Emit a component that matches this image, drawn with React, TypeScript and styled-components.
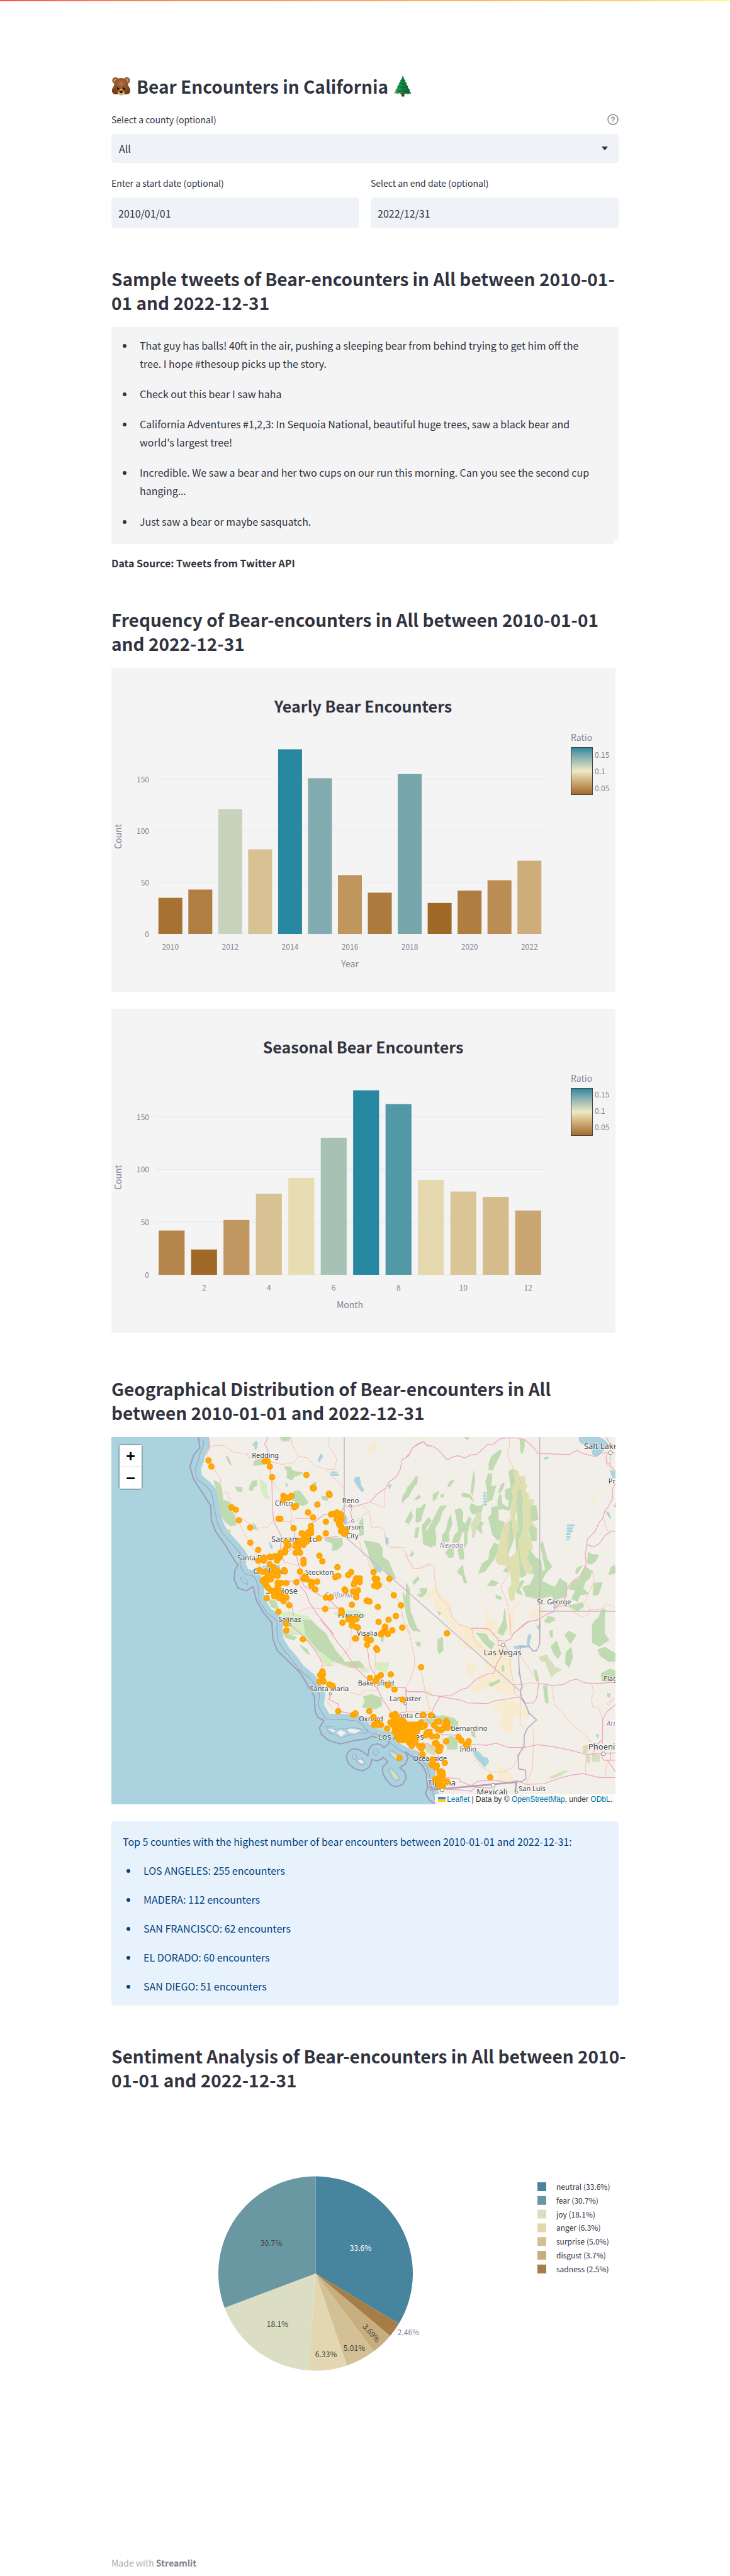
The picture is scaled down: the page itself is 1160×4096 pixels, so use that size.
import React from "react";
import styled, { createGlobalStyle } from "styled-components";

const sans = `"Noto Sans CJK SC", "Noto Sans", sans-serif`;

const GlobalStyle = createGlobalStyle`
  *, *::before, *::after { box-sizing: border-box; }
  body {
    margin: 0;
    background: #ffffff;
    color: #31333f;
    font-family: ${sans};
    font-size: 16px;
    line-height: 29px;
  }
`;

const TopBar = styled.div`
  height: 2px;
  background: linear-gradient(90deg, #ff4b4b, #ff7c58 14%, #ffd173 87%, #fffd80);
`;

const Page = styled.div`
  display: flex;
  flex-direction: column;
  max-width: 846px;
  margin: 0 auto;
  padding: 116px 20px 12px;
`;

const Main = styled.main`
  display: flex;
  flex-direction: column;
  gap: 18px;
`;

const Filters = styled.form`
  display: flex;
  flex-direction: column;
  gap: 22px;
`;

const PageTitle = styled.h1`
  display: flex;
  align-items: center;
  gap: 9px;
  margin: 0 0 2px;
  font-size: 28px;
  font-weight: 600;
  line-height: 38px;
`;

const Field = styled.div`
  display: flex;
  flex-direction: column;
  flex: 1;
  gap: 13px;
`;

const FieldRow = styled.div`
  display: flex;
  gap: 18px;
`;

const LabelRow = styled.div`
  display: flex;
  justify-content: space-between;
  align-items: center;
  height: 20px;
`;

const FieldLabel = styled.label`
  font-size: 14px;
  line-height: 20px;
`;

const HelpButton = styled.button`
  display: flex;
  padding: 0;
  border: 0;
  background: none;
  color: #86878f;
`;

const SelectBox = styled.div`
  display: grid;
  align-items: center;
`;

const Select = styled.select`
  grid-area: 1 / 1;
  width: 100%;
  height: 46px;
  padding: 0 12px;
  border: 0;
  border-radius: 5px;
  appearance: none;
  background: #eff2f7;
  color: #31333f;
  font: 16px/24px ${sans};
`;

const Caret = styled.svg`
  grid-area: 1 / 1;
  justify-self: end;
  margin-right: 17px;
  pointer-events: none;
`;

const DateInput = styled.input`
  width: 100%;
  height: 49px;
  padding: 0 11px;
  border: 0;
  border-radius: 5px;
  background: #eff2f7;
  color: #31333f;
  font: 16px/24px ${sans};
`;

/* The negative right margin lets a long line hang slightly past the column. */
const SectionTitle = styled.h2`
  margin: 0 -14px 2px 0;
  padding-top: 43px;
  font-size: 28px;
  font-weight: 600;
  line-height: 38px;
`;

const TweetFrame = styled.div`
  display: flex;
  flex-direction: column;
  margin-bottom: 9px;
  padding-right: 7px;
  background: #f4f4f4;
`;

const BulletList = styled.ul`
  display: flex;
  flex-direction: column;
  margin: 0;
  padding: 0;
  list-style: none;
`;

const Bullet = styled.li`
  &::before {
    content: "";
    float: left;
    width: 6px;
    height: 6px;
    margin: 12px 0 0 -27px;
    border-radius: 50%;
    background: currentColor;
  }
`;

const TweetList = styled(BulletList)`
  gap: 19px;
  margin-bottom: -7px;
  padding: 15px 32px 21px 45px;
  background: #f4f4f4;
`;

const Ellipsis = styled.span`
  font-family: "Noto Sans", sans-serif;
`;

const Source = styled.p`
  margin: 0;
  font-weight: 600;
  line-height: 20px;
`;

const Figure = styled.figure`
  margin: 0 0 9px;
  padding-right: 5px;
`;

const Drawing = styled.svg`
  display: block;
  width: 100%;
  height: auto;
  font-family: ${sans};
`;

const MapFrame = styled.div`
  position: relative;
  overflow: hidden;
`;

const ZoomControl = styled.div`
  position: absolute;
  top: 11px;
  left: 11px;
  width: 39px;
  border: 2px solid rgba(0, 0, 0, 0.2);
  border-radius: 5px;
  background-clip: padding-box;
`;

const ZoomButton = styled.button`
  display: block;
  width: 100%;
  height: 34px;
  padding: 0;
  border: 0;
  background: #ffffff;
  color: #000000;
  font: bold 25px/34px "Liberation Sans", sans-serif;

  & + & {
    border-top: 1px solid #cccccc;
    height: 35px;
  }
`;

const Attribution = styled.div`
  position: absolute;
  right: 0;
  bottom: 0;
  display: flex;
  align-items: center;
  gap: 2px;
  padding: 0 5px;
  background: rgba(255, 255, 255, 0.8);
  color: #333333;
  font: 12px/16px "Liberation Sans", sans-serif;
`;

const MapLink = styled.a`
  color: #0078a8;
  text-decoration: none;
`;

const InfoBox = styled.section`
  display: flex;
  flex-direction: column;
  gap: 17px;
  padding: 18px 18px 16px;
  border-radius: 5px;
  background: #e8f2fc;
  color: #004280;
`;

const InfoText = styled.p`
  margin: 0;
`;

const InfoList = styled(BulletList)`
  gap: 17px;
  padding-left: 33px;
`;

const Footer = styled.footer`
  margin-top: 195px;
  color: #a9aaaf;
  font-size: 14px;
  line-height: 20px;
`;

const FooterLink = styled.a`
  color: #83848c;
  font-weight: 600;
  text-decoration: none;
`;

/* ---------- Emoji ---------- */

const BearIcon = () => (
  <svg width="31" height="30" viewBox="0 0 31 30" aria-hidden="true">
    <defs>
      <radialGradient id="fur" cx="50%" cy="35%" r="65%">
        <stop offset="0" stopColor="#b9714a" />
        <stop offset="0.45" stopColor="#945527" />
        <stop offset="1" stopColor="#713a10" />
      </radialGradient>
    </defs>
    <circle cx="6.6" cy="6" r="5.2" fill="#8b5128" />
    <circle cx="24.4" cy="6" r="5.2" fill="#8b5128" />
    <circle cx="6.9" cy="6.4" r="3.3" fill="#cf8d72" />
    <circle cx="24.1" cy="6.4" r="3.3" fill="#cf8d72" />
    <path d="M15.5 2C9 2 5 6.5 4.6 12.500C4.300 15.500 1 17.500 1 22C1 26 3.600 28 7.500 28H23.500C27.400 28 30 26 30 22C30 17.500 26.700 15.500 26.400 12.500C26 6.500 22 2 15.500 2Z" fill="url(#fur)" />
    <path d="M15.500 18.500C13.500 21 9.800 23.500 10 26C10.300 28.500 13 29.800 15.500 29.800C18 29.800 20.700 28.500 21 26C21.200 23.500 17.500 21 15.500 18.500Z" fill="#e3b273" />
    <path d="M12.400 23C12.400 21.700 18.600 21.700 18.600 23C18.600 24.800 16.800 26.200 15.500 26.200C14.200 26.200 12.400 24.800 12.400 23Z" fill="#1d1b24" />
    <path d="M15.500 26V28" stroke="#5b3a1c" strokeWidth="0.8" />
    <ellipse cx="10.600" cy="18.200" rx="1.600" ry="2.600" fill="#1b130d" />
    <ellipse cx="20.400" cy="18.200" rx="1.600" ry="2.600" fill="#1b130d" />
    <circle cx="10.900" cy="17.200" r="0.600" fill="#fff" />
    <circle cx="20.700" cy="17.200" r="0.600" fill="#fff" />
  </svg>
);

const TreeIcon = () => (
  <svg width="28" height="34" viewBox="0 0 28 34" aria-hidden="true">
    <defs>
      <linearGradient id="needles" x1="0" x2="1">
        <stop offset="0" stopColor="#2fae58" />
        <stop offset="0.5" stopColor="#14813f" />
        <stop offset="1" stopColor="#0c5c33" />
      </linearGradient>
    </defs>
    <rect x="12" y="26" width="4.400" height="7.500" fill="#5c3317" />
    <path d="M14 0L17 7L18.500 8L17.500 9L20.500 13L19.500 14L23 18L21.500 19L25.500 23L24.500 24L27.500 29L24 28.500L22.500 30.500L19.500 28.500L17.500 30L14 28L10.500 30L8.500 28L5.500 29.500L4 28L0.500 29L3 24L2 23.500L6 19L4.500 18.500L8 14L7 13.500L10.500 9L9.500 8L11.500 6.500Z" fill="url(#needles)" />
    <path d="M10 12L14 14.500L18.500 12M7 17.500L11 19.500L14 18L18 20L21 17.500M4.500 24L9 25.500L13 23.500L18 26L23.500 23M11.500 8L14 9.500L16.500 8" fill="none" stroke="#0a4f2c" strokeWidth="0.9" />
  </svg>
);

const HelpIcon = () => (
  <svg width="18" height="18" viewBox="0 0 18 18" fill="none" stroke="currentColor" strokeWidth="1.500" strokeLinecap="round" aria-hidden="true">
    <circle cx="9" cy="9" r="8" />
    <path d="M6.800 7.200C6.800 4.300 11.200 4.300 11.200 7.200C11.200 8.900 9 9 9 10.600" />
    <path d="M9 13V13.100" />
  </svg>
);

/* ---------- Bar charts ---------- */

const earth: number[][] = [
  [161, 105, 40],
  [189, 146, 90],
  [214, 189, 141],
  [237, 234, 194],
  [181, 200, 184],
  [121, 167, 172],
  [40, 135, 161],
];

const earthColor = (t: number) => {
  const p = Math.min(Math.max(t, 0), 1) * (earth.length - 1);
  const i = Math.min(Math.floor(p), earth.length - 2);
  const c = earth[i].map((v, k) => Math.round(v + (earth[i + 1][k] - v) * (p - i)));
  return `rgb(${c.join(",")})`;
};

type BarChartProps = {
  id: string;
  title: string;
  axis: string;
  first: number;
  values: number[];
  unit: number;
  ratioTicks: [string, number][];
};

const plot = { left: 70, right: 688, base: 423 };

const BarChart = ({ id, title, axis, first, values, unit, ratioTicks }: BarChartProps) => {
  const pitch = (plot.right - plot.left) / values.length;
  const low = Math.min(...values);
  const high = Math.max(...values);
  return (
    <Figure>
      <Drawing viewBox="0 0 801 515" role="img" aria-label={title}>
        <defs>
          <linearGradient id={id} x1="0" y1="1" x2="0" y2="0">
            {earth.map((c, i) => (
              <stop key={i} offset={i / (earth.length - 1)} stopColor={`rgb(${c.join(",")})`} />
            ))}
          </linearGradient>
        </defs>
        <rect width="801" height="515" fill="#f4f4f4" />
        <text x="400" y="71" textAnchor="middle" fontSize="25" fontWeight="700" fill="#31333f">{title}</text>
        {[0, 50, 100, 150].map((v) => (
          <g key={v}>
            <path d={`M${plot.left} ${plot.base - v * unit}H${plot.right}`} stroke="#e6eaf1" strokeWidth="1.200" />
            <text x="60" y={plot.base - v * unit + 5} textAnchor="end" fontSize="12" fill="#808495">{v}</text>
          </g>
        ))}
        {values.map((v, i) => {
          const n = first + i;
          return (
            <g key={n}>
              <rect
                x={plot.left + pitch * (i + 0.1)}
                y={plot.base - v * unit}
                width={pitch * 0.8}
                height={v * unit}
                fill={earthColor((v - low) / (high - low))}
              />
              {n % 2 === 0 && (
                <text x={plot.left + pitch * (i + 0.5)} y="448" textAnchor="middle" fontSize="12" fill="#808495">{n}</text>
              )}
            </g>
          );
        })}
        <text x="379" y="476" textAnchor="middle" fontSize="14" fill="#808495">{axis}</text>
        <text transform="translate(16 268) rotate(-90)" textAnchor="middle" fontSize="14" fill="#808495">Count</text>
        <text x="730" y="116" fontSize="14" fill="#808495">Ratio</text>
        <rect x="730.500" y="126.500" width="34" height="75" fill={`url(#${id})`} stroke="#444444" />
        {ratioTicks.map(([label, y]) => (
          <text key={label} x="768" y={y} fontSize="12" fill="#808495">{label}</text>
        ))}
      </Drawing>
    </Figure>
  );
};

/* ---------- Pie chart ---------- */

const moods = [
  { name: "neutral", legend: "33.6%", label: "33.6%", share: 33.6, color: "#47849d", x: 396, y: 229, ink: "#ffffff" },
  { name: "fear", legend: "30.7%", label: "30.7%", share: 30.7, color: "#6998a2", x: 254, y: 221, ink: "#444444" },
  { name: "joy", legend: "18.1%", label: "18.1%", share: 18.1, color: "#dcdec4", x: 264, y: 350, ink: "#444444" },
  { name: "anger", legend: "6.3%", label: "6.33%", share: 6.33, color: "#e3d7b1", x: 341, y: 398, ink: "#444444" },
  { name: "surprise", legend: "5.0%", label: "5.01%", share: 5.01, color: "#d3c195", x: 386, y: 388, ink: "#444444" },
  { name: "disgust", legend: "3.7%", label: "3.69%", share: 3.69, color: "#c8ad7f", x: 413, y: 364, ink: "#444444", turn: 49 },
  { name: "sadness", legend: "2.5%", label: "2.46%", share: 2.46, color: "#a67c47", x: 472, y: 363, ink: "#808495" },
];

const PieChart = () => {
  const [cx, cy, r] = [324.5, 269, 154.5];
  const total = moods.reduce((sum, m) => sum + m.share, 0);
  const order = [moods[0], ...moods.slice(1).reverse()];
  let from = 0;
  const slices = order.map((m) => {
    const to = from + (m.share / total) * Math.PI * 2;
    const at = (a: number) => `${(cx + r * Math.sin(a)).toFixed(1)} ${(cy - r * Math.cos(a)).toFixed(1)}`;
    const d = `M${cx} ${cy}L${at(from)}A${r} ${r} 0 0 1 ${at(to)}Z`;
    from = to;
    return <path key={m.name} d={d} fill={m.color} />;
  });
  return (
    <Figure>
      <Drawing viewBox="0 0 801 515" role="img" aria-label="Sentiment shares">
        {slices}
        {moods.map((m, i) => (
          <g key={m.name} fontSize="12">
            <text
              transform={`translate(${m.x} ${m.y}) rotate(${m.turn ?? 0})`}
              y="4"
              textAnchor="middle"
              fill={m.ink}
            >
              {m.label}
            </text>
            <rect x="677" y={124 + i * 21.8} width="14" height="14" fill={m.color} />
            <text x="707" y={136 + i * 21.8} fill="#31333f">{`${m.name} (${m.legend})`}</text>
          </g>
        ))}
      </Drawing>
    </Figure>
  );
};

/* ---------- Map ---------- */

type Sheet = { sx: number; sy: number; ox: number; oy: number };

/* Every map sheet has its own scale; these place it on the 801 x 584 canvas. */
const state: Sheet = { sx: 0.5402, sy: 0.4599, ox: -17.8, oy: -121 };
const north: Sheet = { sx: 0.25548, sy: 0.20438, ox: 108.1, oy: -6.5 };
const south: Sheet = { sx: 0.29197, sy: 0.19708, ox: 165.4, oy: 291.1 };
const nevada: Sheet = { sx: 0.21898, sy: 0.20438, ox: 468.7, oy: -6.5 };
const desert: Sheet = { sx: 0.21898, sy: 0.19708, ox: 468.7, oy: 291.1 };

const coast =
  "M318,263L322,293 311,320 304,351 297,373 299,396 323,418 342,444 347,471 354,516 361,556 375,587 399,618 422,649 434,671 428,702 436,720 455,724 470,738 481,773 484,822 503,858 517,869 536,889 538,916 536,922 539,960 555,990 577,1020 599,1055 626,1080 642,1102 653,1127 663,1153 658,1187 674,1220 717,1220 761,1226 780,1239 799,1265 826,1275 858,1284 866,1307 885,1325 912,1342 939,1355 961,1372 977,1393 985,1427 988,1453 993,1483 1001,1513 1009,1532";

type Layer = { sheet: Sheet; kind: "fill" | "line"; color: string; width?: number; d: string };

const forest = "#c0dbb1";
const meadow = "#d7edc1";
const sand = "#f7ebd1";
const range = "#dee1af";
const lake = "#aad3df";
const motorway = "#eea2bb";
const trunk = "#f9c4b1";
const border = "#cbb8cb";

const layers: Layer[] = [
  { sheet: north, kind: "fill", color: meadow, d: "M635,1400L680,1390 730,1410 800,1430 840,1500 870,1568 680,1568Z M500,360L540,400 545,470 560,520 530,500 510,450Z M960,1400L1100,1380 1160,1420 1100,1460 1000,1430Z M625,1240L660,1290 680,1340 640,1330Z" },
  { sheet: south, kind: "fill", color: meadow, d: "M395,0L500,0 560,60 640,200 660,300 620,370 590,350 560,260 470,120Z M870,345L945,345 930,420 880,400Z M760,330L800,380 840,420 800,420Z" },
  { sheet: north, kind: "fill", color: forest, d: "M215,370L245,390 262,430 270,520 310,540 322,600 345,650 352,715 320,722 285,690 260,640 245,500Z M655,262L690,265 700,290 715,300 765,310 740,330 715,335 700,365 670,350 672,300Z M435,440L440,410 455,375 480,370 480,410 462,420 455,448Z M350,420L390,425 388,455 360,450Z M715,455L745,450 765,480 800,540 775,565 750,560 720,530 700,520Z M625,31L690,31 680,60 640,62Z M455,90L475,65 470,105Z M910,820L1010,820 1015,870 980,910 950,912 955,860 905,835Z M1120,690L1140,665 1145,790 1122,800Z M1150,838L1240,860 1262,900 1260,960 1300,1000 1320,1060 1345,1130 1320,1130 1290,1090 1262,1040 1250,1085 1215,1060 1185,980 1175,920Z M1390,1240L1412,1290 1430,1380 1450,1430 1480,1535 1455,1540 1432,1500 1410,1400Z M1385,540L1390,490 1415,450 1445,390 1472,340 1478,385 1450,430 1425,490Z M1515,850L1530,790 1568,700 1568,890Z M1405,690L1440,610 1450,650 1425,705Z M460,250L470,215 515,200 530,240 480,252Z M550,1290L600,1310 615,1370 575,1355Z M290,755L315,755 315,775 290,775Z M290,180L305,190 322,250 310,235Z M830,390L852,385 845,410Z M885,490L925,500 920,525 890,515Z M660,395L672,400 668,418Z" },
  { sheet: south, kind: "fill", color: forest, d: "M480,0L520,0 560,60 600,110 620,170 650,240 700,330 690,350 640,330 590,270 560,240 520,170 490,110Z M370,100L440,140 425,160 380,140Z M460,200L500,240 510,280 480,240Z M680,345L780,330 810,375 740,380Z M805,620L850,600 900,630 905,690 870,715 830,712 800,700 815,660Z M1120,800L1240,770 1300,795 1320,850 1250,840 1150,830Z M1265,960L1285,940 1310,960 1315,1040 1270,1040Z M1210,160L1235,142 1238,240 1218,270Z M1090,180L1115,185 1110,210 1095,200Z M900,120L915,130 910,180 902,160Z" },
  { sheet: south, kind: "fill", color: "#d5dfb9", d: "M1125,985L1180,1010 1200,1060 1190,1090 1150,1060Z M860,850L930,860 950,900 890,885Z" },
  { sheet: desert, kind: "fill", color: sand, d: "M290,0L350,20 470,65 600,60 660,90 690,150 650,150 590,90 490,75 510,160 600,250 700,200 740,260 760,380 750,480 790,590 760,620 660,560 600,530 550,570 500,580 470,545 520,510 530,420 600,450 640,440 570,380 570,300 480,230 420,210 370,170 400,140Z M440,350L500,355 510,400 480,420 490,480 445,420Z M620,690L720,640 780,660 870,710 885,790 820,780 790,740 770,830 780,870 735,915 700,890 665,860 700,800 690,730 640,730Z M130,560L180,555 185,590 145,590Z M640,1160L760,1250 780,1300 680,1300 670,1230Z M590,0L655,0 650,40 600,50Z M740,0L790,0 760,60Z" },
  { sheet: nevada, kind: "fill", color: sand, d: "M215,1210L240,1215 240,1260 310,1310 320,1370 330,1440 400,1490 470,1520 450,1568 390,1568 300,1470 240,1380 200,1370 210,1320 190,1270 145,1280 140,1250Z M575,1390L600,1390 605,1470 650,1520 700,1540 700,1568 560,1568 540,1520 580,1490Z M840,1290L780,1380 770,1480 755,1568 735,1568 740,1440 770,1360Z M895,1390L1010,1350 1010,1395 950,1450 900,1430Z M1345,540L1355,500 1375,495 1370,530 1345,560Z M240,1098L258,1100 258,1118 242,1112Z M35,31L100,31 90,55Z M535,1310L550,1295 555,1320Z" },
  { sheet: north, kind: "fill", color: sand, d: "M1158,200L1180,130 1210,65 1232,90 1220,130 1180,160Z M1530,1270L1568,1240 1568,1285Z" },
  { sheet: nevada, kind: "fill", color: forest, d: "M0,470L5,430 40,390 60,375 70,340 80,345 75,395 40,415 15,460Z M600,285L600,240 615,190 640,165 680,132 690,145 660,210 635,265 625,290Z M825,50L855,55 855,110 840,160 830,140Z M745,300L770,282 800,370 780,440 760,590 740,600 745,520 720,510 720,440 760,430Z M575,380L595,318 620,320 615,420 650,410 620,520 585,535 590,450Z M670,460L690,400 710,390 700,430 680,465Z M665,520L680,478 690,500 690,550 740,585 735,600 700,590 665,595 668,680 710,695 700,740 680,790 695,800 665,835 625,790 605,690 595,660 620,630 620,580 665,570Z M470,460L480,360 490,300 495,380 480,480Z M400,480L415,468 460,480 490,535 460,500 410,495Z M460,590L470,550 520,575 555,560 540,620 480,630Z M70,690L75,585 100,590 130,555 140,560 115,630 105,680 85,695Z M115,720L160,660 180,680 140,740 145,790 185,700 230,600 250,570 290,565 260,610 240,680 205,740 215,820 210,875 170,882 125,865Z M265,850L260,800 290,760 305,680 322,640 330,710 305,780 310,840Z M335,850L350,800 380,760 355,600 390,588 410,620 405,690 430,710 455,655 470,670 440,780 440,860 420,890 425,750 400,780 380,850Z M510,720L530,690 560,700 540,730 550,780 515,750Z M195,530L195,480 235,455 215,510Z M60,515L90,485 105,500 75,518Z M60,810L70,740 92,735 80,812Z M285,930L310,900 340,905 340,965 310,970Z M375,905L410,895 418,980 388,980Z M525,1090L550,1020 600,980 605,920 640,855 675,880 640,975 600,1030 570,1075Z M370,1080L408,1030 415,1090 438,1165 420,1165 405,1110Z M740,700L780,660 790,700 780,820 740,930 735,980 725,870 740,800Z M900,565L940,565 955,670 920,685 900,680 905,710 945,750 942,835 910,835 890,760Z M810,400L850,395 840,600 860,700 820,830 830,900 830,1000 870,1100 835,1125 800,1060 745,1010 760,970 800,930 795,830 810,700 805,600Z M880,960L890,900 940,975 975,990 985,1080 1010,1070 1000,1010 975,870 988,845 1020,980 1055,1040 1010,1090 980,1150 1050,1190 1080,1200 1115,1135 1165,1170 1160,1270 1070,1300 1060,1265 960,1290 870,1270 845,1200 900,1180 935,1100 890,1080Z M800,1200L835,1150 855,1155 820,1210 840,1260 800,1240Z M590,1185L620,1145 665,1165 640,1190Z M80,1260L110,1250 100,1210 150,1212 140,1250 110,1275Z M45,1160L85,1120 92,1135 60,1175Z M25,955L45,922 52,945 32,960Z M0,1170L25,1220 20,1260 30,1400 60,1490 95,1545 60,1530 25,1460 0,1400Z M1315,1010L1320,930 1350,945 1395,950 1370,1000 1340,1020Z M1180,1215L1210,1160 1260,1130 1300,1045 1345,1080 1330,1130 1300,1150 1280,1210 1320,1250 1260,1260 1240,1310 1200,1290 1230,1220Z M1355,1260L1360,1170 1420,1165 1400,1240 1380,1262Z M1470,1100L1490,1040 1518,1030 1518,1090Z M1180,1345L1280,1320 1285,1350 1240,1385Z M670,1530L700,1480 715,1370 725,1530 700,1545Z M1355,1568L1350,1490 1400,1430 1420,1370 1440,1370 1435,1568Z M1005,1465L1030,1425 1075,1440 1040,1480Z M225,1385L250,1405 240,1415Z M1228,1085L1240,1050 1275,1035 1240,1095Z M650,1260L690,1280 685,1295 655,1285Z M425,31L455,31 440,55Z M300,415L320,375 345,370 315,415Z M250,482L272,482 270,498 250,498Z M705,1075L730,1040 735,1085Z" },
  { sheet: desert, kind: "fill", color: forest, d: "M510,105L580,115 600,160 640,190 615,235 570,190Z M230,190L245,145 262,150 262,240 240,270 228,240Z M665,100L700,10 725,20 728,60 700,122Z M15,0L35,0 60,55 95,85 60,80 30,40Z M70,180L100,180 100,210 85,205Z M1350,60L1370,0 1435,0 1430,100 1470,160 1400,210 1350,180Z M1390,240L1440,220 1518,270 1518,330 1470,335 1410,290Z M1150,120L1180,90 1230,120 1190,190Z M1155,350L1160,260 1195,220 1205,300 1180,380Z M1050,210L1090,170 1120,270 1100,310 1070,270Z M1040,90L1060,80 1060,140 1045,130Z M925,400L945,410 960,490 945,490Z M995,535L1018,532 1030,668 1010,665Z M1415,430L1480,395 1518,410 1518,490 1420,490Z M230,790L270,775 375,820 370,850 310,860 240,830Z M300,950L320,935 370,960 365,1030 300,1045Z M600,510L640,500 670,480 680,495 640,520 610,535Z M692,370L705,368 710,400 698,412Z M470,900L495,895 500,945 480,935Z M1460,590L1480,595 1475,625 1460,615Z M1005,0L1080,0 1020,22Z M945,50L970,40 960,75Z" },
  { sheet: nevada, kind: "fill", color: range, d: "M775,285L805,295 830,370 830,340 860,340 860,390 875,410 860,450 885,480 890,520 925,520 915,560 900,560 895,650 915,700 945,740 900,710 880,770 915,880 915,910 890,900 875,980 915,1050 915,1100 880,1090 840,1020 815,850 850,740 850,520 830,420 805,450 800,600 785,660 815,745 780,820 770,700 755,620 765,540 780,520 765,440 795,380Z M720,700L745,720 735,940 755,990 800,930 810,905 820,1060 815,1200 790,1210 780,1300 755,1305 740,1220 765,1180 760,1100 730,1030 670,1020 650,990 665,920 680,830Z" },
  { sheet: nevada, kind: "fill", color: "#d5dfb9", d: "M520,620L542,620 540,680 505,740 495,805 478,812 480,770 468,720Z" },
  { sheet: desert, kind: "fill", color: "#d5dfb9", d: "M965,300L1020,280 1035,320 1060,350 1075,380 1125,400 1085,420 1055,455 1030,400 1015,340 975,325Z M1285,1020L1320,1020 1310,1070 1285,1070Z M1350,1080L1400,1090 1400,1140 1350,1140Z M1310,1090L1335,1100 1330,1150 1312,1145Z M1040,1270L1130,1225 1170,1215 1120,1250 1060,1275Z" },
  { sheet: south, kind: "fill", color: "#f2efe9", d: "M620,880L648,890 645,900Z M662,910L680,890 708,910 684,935Z M722,885L738,878 784,890 760,915 730,900Z M778,1130L790,1128 804,1148 792,1152Z" },
  { sheet: south, kind: "fill", color: range, d: "M955,1070L975,1080 1005,1130 980,1115Z M955,1210L970,1230 992,1275 975,1275Z" },
  { sheet: nevada, kind: "fill", color: lake, d: "M1255,31L1395,31 1440,60 1465,90 1440,120 1410,155 1380,180 1355,170 1345,120 1330,90 1280,85 1255,65Z M1478,290L1518,305 1518,350 1500,350Z M1168,714H1220L1215,724H1168Z M1166,738H1208L1203,748H1164Z M1170,760H1202V769H1170Z M1160,782H1188V791H1160Z M1165,805H1188V814H1165Z M1160,827H1182V832H1160Z M562,463H578V472H562Z M562,486H578V494H562Z M562,508H576V516H562Z M562,531H580V539H562Z M562,552H582V562H562Z M1000,195L1030,190 1010,205Z M1450,612L1470,625 1482,665 1470,650Z" },
  { sheet: north, kind: "fill", color: lake, d: "M1087,370L1097,342 1120,345 1128,410 1145,440 1138,458 1115,425Z M1215,1060L1230,1040 1248,1055 1230,1078Z M1030,640L1042,660 1038,710 1028,700Z M880,165L890,180 870,225 862,212Z M1283,810L1298,820 1298,865 1285,860Z M1300,410L1315,400 1308,435Z M940,320H988V330H940Z M945,303L982,303 980,308H945Z M470,120L480,65 485,80 475,130Z M515,1040L620,1030 625,1060 560,1070Z M560,850L580,890 570,900Z M460,700L482,745 470,750Z" },
  { sheet: desert, kind: "fill", color: lake, d: "M490,1065L520,1060 560,1110 590,1115 597,1145 568,1185 540,1150 510,1115Z M778,215L830,205 885,210 875,190 885,130 895,115 905,120 890,190 895,215 830,220 800,235Z M815,420L828,440 825,460Z M845,640L858,650 850,665Z M885,735L892,750 886,760Z M1380,920L1395,930 1388,950Z" },
  { sheet: south, kind: "line", color: "#a39bbb", width: 0.8, d: "M600,860L640,855 650,885 690,870 700,880 740,865 800,880 828,890 820,915 780,910 740,925 700,940 680,955 655,920 620,915Z M745,1100A12,18 0 1 0 768,1104A12,18 0 1 0 745,1100Z M768,1130L800,1115 815,1150 800,1168 775,1155Z M858,1070A14,22 0 1 0 888,1068A14,22 0 1 0 858,1070Z M942,1060L960,1050 1010,1100 1018,1125 990,1135 955,1100Z M938,1200L950,1190 965,1205 1000,1260 1005,1285 985,1300 960,1270Z" },
  { sheet: north, kind: "line", color: "#a39bbb", width: 0.8, d: "M382,1125L400,1130 425,1155 425,1180 400,1165 380,1145Z" },
  { sheet: state, kind: "line", color: "#9f9ab8", width: 2, d: "M289,263L293,300 275,325 264,365 275,410 300,455 325,500 327,550 340,590 370,640 390,680 405,705 396,725 394,755 405,785 430,795 450,780 460,830 480,870 505,905 508,960 520,1000 555,1040 590,1080 612,1125 630,1160 632,1210 640,1232 658,1243 645,1268 650,1290 672,1312 706,1324 750,1312 782,1307 800,1297 814,1303" },
  { sheet: south, kind: "line", color: "#9f9ab8", width: 2, d: "M940,980L942,1000 915,1030 905,1010 880,998 850,1010 835,1040 830,1095 800,1060 770,1040 740,1042 718,1070 712,1110 725,1160 760,1200 800,1216 835,1190 848,1150 848,1125 880,1135 905,1120 912,1105 938,1143 912,1180 908,1220 925,1280 955,1330 985,1345 1020,1325 1038,1275 1030,1225 1003,1190 1035,1160 1048,1110 1033,1063 1080,1110 1130,1180 1148,1240 1150,1300 1155,1345 1240,1365 M1155,1350L1142,1400 1165,1455 1200,1484" },
  { sheet: north, kind: "line", color: trunk, width: 1, d: "M190,105L230,97 280,97 300,120 340,150 420,160 430,190 540,215 640,245 710,232 740,180 700,90 695,31 M740,180L800,195 830,240 860,265 910,280 965,285 978,200 925,90 930,31 M910,285L960,350 1000,390 1023,440 M165,160L220,290 255,350 260,460 300,465 320,550 355,640 400,780 470,920 505,1050 M370,660L410,680 440,710 490,765 495,740 550,735 580,685 700,692 730,665 810,665 M578,370L600,420 650,490 690,580 700,690 M1135,560L1180,610 1195,740 1250,730 1275,760 1285,870 1310,890 1390,890 1410,960 1455,1055 1500,1050 1568,1025 M1085,700L1180,605 M1275,430L1275,580 1185,538 M1120,840L1140,950 1165,955 1200,1090 1270,1180 1330,1250 1380,1340 1390,1450 1430,1568 M740,1390L800,1360 880,1366 1000,1362 928,1362 928,1290 M650,1005L740,1030" },
  { sheet: nevada, kind: "line", color: trunk, width: 1, d: "M750,31L745,120 735,160 755,230 785,280 830,380 805,450 798,590 770,660 740,670 710,740 738,790 730,870 738,1000 745,1090 720,1140 685,1190 700,1240 735,1325 745,1400 758,1540 M0,930L10,980 55,1055 100,1055 150,1018 215,1045 200,1080 220,1230 250,1290 310,1350 330,1430 380,1490 475,1522 590,1520 640,1568 M1305,1045L1350,1075 1365,1150 1325,1240 1295,1320 1330,1360 1325,1410 1275,1435 1225,1400 1180,1350 1100,1350 1100,1380 M1330,1375L1410,1370 1455,1330 1518,1355 M1430,655L1450,740 1470,775 M1445,180L1455,250 1490,270" },
  { sheet: desert, kind: "line", color: trunk, width: 1, d: "M0,30L20,80 35,180 60,300 60,360 30,480 0,540 M60,360L110,420 140,590 175,740 M475,70L485,130 510,190 560,240 600,255 M755,0L760,130 M755,290L755,380 780,520 850,520 890,505 960,512 M830,290L890,390 960,512 M780,520L790,600 820,620 M845,530L825,700 825,830 860,880 M910,860L925,900 915,1200 870,1320 M1055,527L1075,680 1130,745 1200,840 1280,910 1345,990 M1345,515L1360,580 1345,630 1350,700 1390,700 1425,795 M480,1060L500,1130 540,1180 610,1225 700,1225 770,1190 810,1120 850,990 M1320,1010H1290V1080 M1305,1083L1300,1230 M1460,1130L1440,1260 M610,1225V1290 M1440,660L1470,690 1510,630 1460,670 M0,740L170,740 M265,925L260,990 330,1040" },
  { sheet: south, kind: "line", color: trunk, width: 1, d: "M580,370L640,365 660,340 720,380 840,388 M730,580L790,605 810,565 880,565 M740,60L735,210 710,260 665,330 M870,230L868,430 M625,600L610,660 640,720" },
  { sheet: north, kind: "line", color: motorway, width: 1.2, d: "M180,31L190,105 170,160 M552,31L530,88 550,130 552,200 562,270 575,380 578,560 585,680 600,720 632,800 628,930 650,1000 M750,1190L790,1250 805,1310 850,1400 960,1568 M690,700L715,760 725,940 745,1040 752,1140 775,1190 870,1260 940,1310 1010,1390 M630,970L700,900 760,820 830,700 905,632 1000,640 1025,570 1100,568 1185,538 1230,475 1283,430 1300,385 1350,340 1375,280 1383,210 1425,180 1450,115 1515,68 1540,98 1568,100 M1075,570L1065,620 1078,690 1030,700 M860,820L990,805 M620,1170L750,1140 M505,1050L530,1100 M640,1250L700,1340 710,1420" },
  { sheet: nevada, kind: "line", color: motorway, width: 1.2, d: "M0,185L20,165 45,115 90,80 123,67 155,98 205,110 250,150 285,200 305,207 330,188 375,177 425,195 470,168 510,168 590,90 630,88 680,45 740,38 795,38 855,50 920,108 955,160 1185,168 1240,133 1270,155 1375,187 1415,155 1480,155 1518,155 M1450,31L1480,90 1478,255 1518,300 M1455,160V240H1480 M1518,385L1495,440 1497,510 1465,575 1440,605 1430,655 1400,695 1370,765 1312,830 1310,870 1298,950 1305,1020 1265,1110 1200,1160 1165,1215 1160,1265 1130,1330 1080,1355 1075,1390 1020,1410 970,1445 940,1458 880,1468 840,1500 775,1565 M1312,870L1365,885 1400,860 1440,800 1490,762 1518,767" },
  { sheet: desert, kind: "line", color: motorway, width: 1.2, d: "M948,3L890,10 830,60 775,110 760,150 720,170 665,165 665,205 710,205 700,230 690,290 655,350 635,430 595,432 510,475 440,548 410,555 325,607 245,615 210,680 185,740 150,790 175,850 M720,205L755,290 M470,70L510,62 600,72 670,160 M245,615L330,633 410,650 440,668 590,673 650,648 740,635 820,620 860,670 920,668 945,630 960,512 1060,527 1140,520 1185,490 1235,475 1300,508 1400,510 1518,500 M0,575L135,580 185,605 245,615 M250,925L360,928 400,970 450,1000 585,1010 650,992 740,1027 860,1027 950,1005 1060,1020 1180,1047 1305,1083 1440,1075 1518,1070 M290,1270L385,1280 390,1300 470,1335 520,1300 620,1290 740,1310 800,1295 870,1325 1000,1320 1100,1278 1200,1250 1280,1238 1400,1270 1518,1270 M1518,680L1455,740 1425,800 1422,1000 M1355,1075L1385,1000 1415,970 M1410,1080L1430,1130 1518,1130 M1460,1130L1518,1225 M1480,1060V1130 M290,1365L400,1370 470,1380 500,1350 620,1355 M110,880L240,880 M150,990L230,1080 230,1180" },
  { sheet: south, kind: "line", color: motorway, width: 1.2, d: "M572,0L620,80 665,180 710,260 760,380 880,550 910,640 960,750 1000,800 M822,170L840,370 880,470 885,560 M410,40L480,130 540,240 580,340 580,440 M625,600L620,640 670,680 670,735 760,760 850,830 M880,450L960,545 1035,545 1040,575 1140,580 M1035,545L1040,740 1000,750 M1060,1030L1110,1070 1180,1130 1195,1240 1215,1340" },
  { sheet: nevada, kind: "line", color: border, width: 1.6, d: "M968,31V1568M968,1387H1518" },
  { sheet: desert, kind: "line", color: "#b5a9c0", width: 1.6, d: "M968,0V190L945,245 920,250 890,210 830,215 815,300 820,420 840,540 828,560 830,610 860,670 890,750 945,805 880,870 855,930 855,1020 810,1090 815,1200 865,1210 868,1280 840,1300 800,1305" },
  { sheet: desert, kind: "line", color: "#b0a0b8", width: 2.6, d: "M170,1370L260,1362 800,1307 790,1385" },
  { sheet: state, kind: "line", color: border, width: 1.6, d: "M718,263V605L1235,1141" },
];

const matrix = ({ sx, sy, ox, oy }: Sheet) => `matrix(${sx} 0 0 ${sy} ${ox} ${oy})`;

type Place = { name: string; x: number; y: number; size?: number; region?: boolean; pin?: [number, number] };

/* Left edge and vertical centre of each name on the state sheet. */
const places: Place[] = [
  { name: "Redding", x: 446, y: 326 },
  { name: "Chico", x: 514, y: 491 },
  { name: "Reno", x: 712, y: 482, pin: [736, 501] },
  { name: "Carson", x: 706, y: 574, pin: [743, 553] },
  { name: "City", x: 724, y: 604 },
  { name: "Sacramento", x: 503, y: 617, size: 13 },
  { name: "Santa Rosa", x: 403, y: 680 },
  { name: "Oakland", x: 450, y: 728, size: 13 },
  { name: "Stockton", x: 603, y: 730 },
  { name: "San Jose", x: 487, y: 796, size: 13 },
  { name: "California", x: 660, y: 809, region: true },
  { name: "Salinas", x: 524, y: 893, pin: [557, 911] },
  { name: "Fresno", x: 699, y: 881, size: 13 },
  { name: "Visalia", x: 755, y: 941 },
  { name: "Bakersfield", x: 758, y: 1114 },
  { name: "Santa Maria", x: 617, y: 1133, pin: [677, 1151] },
  { name: "Lancaster", x: 851, y: 1168, pin: [897, 1185] },
  { name: "Santa Clarita", x: 866, y: 1227 },
  { name: "Oxnard", x: 761, y: 1237 },
  { name: "Los Angeles", x: 817, y: 1301, size: 13 },
  { name: "Bernardino", x: 1031, y: 1269 },
  { name: "Indio", x: 1057, y: 1342 },
  { name: "Oceanside", x: 920, y: 1374 },
  { name: "Tijuana", x: 963, y: 1459, size: 13, pin: [1006, 1483] },
  { name: "Mexicali", x: 1107, y: 1491, size: 13, pin: [1156, 1467] },
  { name: "San Luis", x: 1231, y: 1479, pin: [1224, 1491] },
  { name: "Río Colorado", x: 1231, y: 1508 },
  { name: "Las Vegas", x: 1128, y: 1009, size: 13, pin: [1185, 982] },
  { name: "Nevada", x: 999, y: 638, region: true },
  { name: "St. George", x: 1285, y: 832, pin: [1338, 850] },
  { name: "Salt Lake City", x: 1423, y: 295, size: 13, pin: [1501, 317] },
  { name: "Provo", x: 1495, y: 415 },
  { name: "Utah", x: 1511, y: 498, region: true },
  { name: "Flagstaff", x: 1481, y: 1099 },
  { name: "Arizona", x: 1490, y: 1253, region: true },
  { name: "Phoenix", x: 1436, y: 1335, size: 13, pin: [1481, 1358] },
];

const northDots =
  "181,215 199,261 530,220 549,220 562,261 576,344 790,327 830,425 836,430 832,432 647,490 655,498 697,490 680,505 647,522 725,568 715,578 720,573 930,473 934,483 858,557 800,618 831,657 911,691 617,668 628,668 324,579 351,597 370,680 441,736 441,854 490,910 710,741 818,724 911,781 867,820 943,634 955,630 980,620 1000,630 978,645 1005,635 1008,665 978,673 1005,685 992,700 995,715 1003,725 1010,740 1035,755 1005,765 1020,770 1035,770 1024,785 1028,760 760,781 795,781 818,755 818,780 805,770 780,800 795,810 795,840 745,840 770,830 725,865 722,880 745,870 772,870 760,850 785,850 738,905 722,932 750,932 735,920 665,848 668,878 680,875 658,910 656,930 630,932 490,994 526,970 562,963 593,960 525,994 607,994 615,975 625,965 618,955 605,965 562,1022 584,1044 772,988 772,1016 871,955 889,999 983,1044 498,1067 515,1080 540,1082 590,1080 612,1078 600,1065 652,1067 656,1078 611,1111 590,1105 575,1100 560,1120 568,1140 540,1130 525,1140 518,1150 530,1160 535,1170 545,1150 540,1190 550,1200 750,1078 778,1117 772,1133 792,1140 788,1130 857,1157 822,1160 820,1175 822,1190 845,1218 728,1162 665,1168 634,1168 612,1165 612,1185 615,1210 570,1225 580,1235 600,1225 600,1250 590,1270 610,1270 620,1285 635,1260 665,1280 640,1280 647,1308 625,1240 543,1285 683,1341 616,1391 970,1122 988,1112 1050,1106 1068,1083 1100,1132 1122,1132 1105,1150 1122,1160 1090,1160 1085,1178 1207,1083 1215,1133 1230,1138 1225,1150 1228,1170 1212,1188 1240,1185 1230,1195 1306,1134 1333,1263 1378,1341 1028,1218 1033,1228 1110,1224 1080,1233 1100,1240 1100,1255 1100,1278 911,1280 940,1280 907,1370 1073,1336 1165,1306 1182,1312 1172,1308 1234,1353 1008,1380 1010,1400 1008,1392 1346,1425 1301,1453 1239,1470 1014,1476 1050,1450 1065,1450 1080,1450 1101,1448 1075,1470 1073,1498 1100,1510 1110,1515 1386,1515 1324,1536 1279,1508 1278,1525 1275,1545 663,1484 665,1537";

const southDots =
  "476,154 582,415 570,444 585,438 580,430 567,496 585,485 588,496 620,520 637,531 760,148 765,148 822,148 845,160 825,200 875,228 880,240 900,113 938,113 920,90 924,75 910,100 925,95 1260,107 1119,380 841,467 900,444 954,438 880,466 875,485 871,492 938,525 974,560 1018,642 668,735 750,765 762,752 837,735 860,781 862,845 882,828 900,845 885,845 935,875 1131,764 1174,769 978,757 960,768 970,775 985,775 972,795 985,800 1018,808 1119,827 1140,850 1150,910 1165,902 1145,930 1178,938 1205,938 1190,850 1205,820 1218,820 1256,815 1256,830 1262,828 1250,850 1265,868 1245,870 1210,880 1225,890 1235,878 1195,995 1203,995 1256,978 1323,943 1338,972 1378,978 1362,1005 1370,1008 1210,1020 1225,1025 1213,1055 1220,1055 1110,1018 1127,1018 1120,1035 1127,1083 1001,1112 1181,1125 1183,1140 1175,1168 1190,1175 1205,1175 1200,1190 1248,1152 1220,1228 1235,1228 1228,1220 1225,1240 1238,1255 1195,1285 1210,1280 1220,1270 1235,1285 1210,1300 1260,1303 1215,1320 1218,1338 1238,1338 1230,1335 1495,1269";

/* Los Angeles is dense enough to be kept as rows: y, first x, last x. */
const cityRows: [number, number, number][] = [
  [826, 952, 1030],
  [845, 965, 1125],
  [862, 985, 1128],
  [880, 978, 1108],
  [900, 975, 1104],
  [925, 986, 1080],
  [945, 990, 1085],
  [965, 1000, 1088],
  [990, 1055, 1088],
  [1015, 1068, 1072],
];

const readDots = (text: string, s: Sheet) =>
  text.split(" ").map((pair) => {
    const [x, y] = pair.split(",").map(Number);
    return [s.ox + x * s.sx, s.oy + y * s.sy];
  });

const dots = [
  ...readDots(northDots, north),
  ...readDots(southDots, south),
  ...cityRows.flatMap(([y, from, to]) => {
    const row: number[][] = [];
    for (let x = from; x <= to; x += 11) row.push([south.ox + x * south.sx, south.oy + y * south.sy]);
    return row;
  }),
];

const EncounterMap = () => (
  <Figure>
    <MapFrame>
      <Drawing viewBox="0 0 801 584" role="img" aria-label="Map of bear encounters">
        <rect width="801" height="584" fill="#aad3df" />
        <g transform={matrix(state)} fill="none" strokeLinejoin="round">
          <path d={coast} stroke="#a39bbb" strokeWidth="19" vectorEffect="non-scaling-stroke" />
          <path d={coast} stroke="#aad3df" strokeWidth="17" vectorEffect="non-scaling-stroke" />
          <path d={`${coast}L1516,1532V263Z`} fill="#f2efe9" />
        </g>
        {layers.map((l, i) => (
          <g key={i} transform={matrix(l.sheet)}>
            <path
              d={l.d}
              fill={l.kind === "fill" ? l.color : "none"}
              stroke={l.color}
              strokeWidth={l.width ?? 1.5}
              strokeLinejoin="round"
              vectorEffect="non-scaling-stroke"
            />
          </g>
        ))}
        {places.map((p) => (
          <g key={p.name} fontFamily='"Noto Sans", sans-serif' strokeLinejoin="round">
            {p.pin && (
              <circle
                cx={state.ox + p.pin[0] * state.sx}
                cy={state.oy + p.pin[1] * state.sy}
                r={p.size ? 3 : 2}
                fill="#ffffff"
                stroke="#777777"
              />
            )}
            <text
              x={state.ox + p.x * state.sx}
              y={state.oy + p.y * state.sy + 4}
              fontSize={p.size ?? 11}
              fontStyle={p.region ? "italic" : "normal"}
              fill={p.region ? "#9a7b9f" : "#444444"}
              stroke="#ffffff"
              strokeOpacity="0.7"
              strokeWidth="2"
              paintOrder="stroke"
            >
              {p.name}
            </text>
          </g>
        ))}
        {dots.map(([x, y], i) => (
          <circle key={i} cx={x.toFixed(1)} cy={y.toFixed(1)} r="3.400" fill="#ffb02e" stroke="#ffa500" strokeWidth="3.400" />
        ))}
      </Drawing>
      <ZoomControl>
        <ZoomButton type="button" aria-label="Zoom in">+</ZoomButton>
        <ZoomButton type="button" aria-label="Zoom out">−</ZoomButton>
      </ZoomControl>
      <Attribution>
        <svg width="12" height="8" viewBox="0 0 12 8" aria-hidden="true">
          <path fill="#4c7be1" d="M0 0h12v4H0z" />
          <path fill="#ffd500" d="M0 4h12v4H0z" />
        </svg>
        <span>
          <MapLink href="#leaflet">Leaflet</MapLink> | Data by © <MapLink href="#osm">OpenStreetMap</MapLink>, under{" "}
          <MapLink href="#odbl">ODbL</MapLink>.
        </span>
      </Attribution>
    </MapFrame>
  </Figure>
);

/* ---------- Page ---------- */

const counties = [
  "LOS ANGELES: 255 encounters",
  "MADERA: 112 encounters",
  "SAN FRANCISCO: 62 encounters",
  "EL DORADO: 60 encounters",
  "SAN DIEGO: 51 encounters",
];

export default function App() {
  return (
    <>
      <GlobalStyle />
      <TopBar />
      <Page>
        <Main>
          <Filters>
            <PageTitle>
              <BearIcon />
              <span>Bear Encounters in California</span>
              <TreeIcon />
            </PageTitle>
            <Field>
              <LabelRow>
                <FieldLabel htmlFor="county">Select a county (optional)</FieldLabel>
                <HelpButton type="button" aria-label="Help">
                  <HelpIcon />
                </HelpButton>
              </LabelRow>
              <SelectBox>
                <Select id="county" defaultValue="All">
                  <option>All</option>
                </Select>
                <Caret width="10" height="6" viewBox="0 0 10 6" aria-hidden="true">
                  <path d="M0 0H10L6 5Q5 6 4 5Z" fill="#31333f" />
                </Caret>
              </SelectBox>
            </Field>
            <FieldRow>
              <Field>
                <FieldLabel htmlFor="start">Enter a start date (optional)</FieldLabel>
                <DateInput id="start" type="text" defaultValue="2010/01/01" />
              </Field>
              <Field>
                <FieldLabel htmlFor="end">Select an end date (optional)</FieldLabel>
                <DateInput id="end" type="text" defaultValue="2022/12/31" />
              </Field>
            </FieldRow>
          </Filters>

          <SectionTitle>Sample tweets of Bear-encounters in All between 2010-01-01 and 2022-12-31</SectionTitle>
          <TweetFrame>
            <TweetList>
              <Bullet>
                That guy has balls! 40ft in the air, pushing a sleeping bear from behind trying to get him off the tree.
                I hope #thesoup picks up the story.
              </Bullet>
              <Bullet>Check out this bear I saw haha</Bullet>
              <Bullet>
                California Adventures #1,2,3: In Sequoia National, beautiful huge trees, saw a black bear and world's
                largest tree!
              </Bullet>
              <Bullet>
                Incredible. We saw a bear and her two cups on our run this morning. Can you see the second cup
                hanging<Ellipsis>…</Ellipsis>
              </Bullet>
              <Bullet>Just saw a bear or maybe sasquatch.</Bullet>
            </TweetList>
          </TweetFrame>
          <Source>Data Source: Tweets from Twitter API</Source>

          <SectionTitle>Frequency of Bear-encounters in All between 2010-01-01 and 2022-12-31</SectionTitle>
          <BarChart
            id="yearly"
            title="Yearly Bear Encounters"
            axis="Year"
            first={2010}
            values={[35, 43, 121, 82, 179, 151, 57, 40, 155, 30, 42, 52, 71]}
            unit={1.64}
            ratioTicks={[["0.15", 143], ["0.1", 169], ["0.05", 196]]}
          />
          <BarChart
            id="seasonal"
            title="Seasonal Bear Encounters"
            axis="Month"
            first={1}
            values={[42, 24, 52, 77, 92, 130, 175, 162, 90, 79, 74, 61]}
            unit={1.676}
            ratioTicks={[["0.15", 141], ["0.1", 167], ["0.05", 193]]}
          />

          <SectionTitle>Geographical Distribution of Bear-encounters in All between 2010-01-01 and 2022-12-31</SectionTitle>
          <EncounterMap />
          <InfoBox>
            <InfoText>
              Top 5 counties with the highest number of bear encounters between 2010-01-01 and 2022-12-31:
            </InfoText>
            <InfoList>
              {counties.map((c) => (
                <Bullet key={c}>{c}</Bullet>
              ))}
            </InfoList>
          </InfoBox>

          <SectionTitle>Sentiment Analysis of Bear-encounters in All between 2010-01-01 and 2022-12-31</SectionTitle>
          <PieChart />
        </Main>
        <Footer>
          Made with <FooterLink href="#streamlit">Streamlit</FooterLink>
        </Footer>
      </Page>
    </>
  );
}
